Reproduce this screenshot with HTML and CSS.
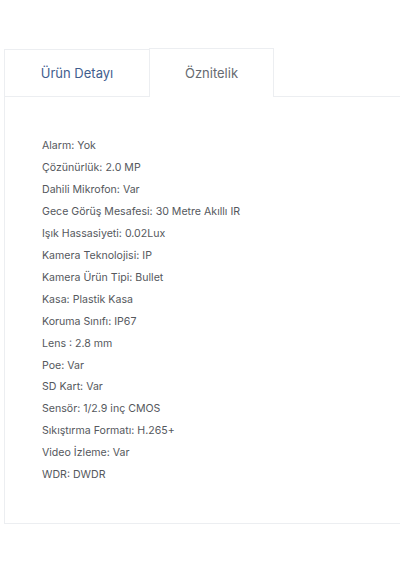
FILE: index.html
```html
<!DOCTYPE html>
<html lang="tr">
<head>
<meta charset="utf-8">
<title>Öznitelik</title>
<link rel="stylesheet" href="styles.css">
</head>
<body>
<div class="product-tabs">
  <div class="tab-bar">
    <div class="tab">Ürün Detayı</div>
    <div class="tab tab-active">Öznitelik</div>
    <div class="tab-rest"></div>
  </div>
  <div class="tab-panel">
    <ul class="attr-list">
      <li>Alarm: Yok</li>
      <li>Çözünürlük: 2.0 MP</li>
      <li>Dahili Mikrofon: Var</li>
      <li>Gece Görüş Mesafesi: 30 Metre Akıllı IR</li>
      <li>Işık Hassasiyeti: 0.02Lux</li>
      <li>Kamera Teknolojisi: IP</li>
      <li>Kamera Ürün Tipi: Bullet</li>
      <li>Kasa: Plastik Kasa</li>
      <li>Koruma Sınıfı: IP67</li>
      <li>Lens : 2.8 mm</li>
      <li>Poe: Var</li>
      <li>SD Kart: Var</li>
      <li>Sensör: 1/2.9 inç CMOS</li>
      <li>Sıkıştırma Formatı: H.265+</li>
      <li>Video İzleme: Var</li>
      <li>WDR: DWDR</li>
    </ul>
  </div>
</div>
</body>
</html>
```
FILE: styles.css
```css
html, body {
  margin: 0;
  padding: 0;
  background: #ffffff;
}

body {
  font-family: Inter, "Noto Sans", sans-serif;
  padding: 48px 0 0 4px;
}

.product-tabs {
  width: 410px;
}

.tab-bar {
  display: flex;
  align-items: flex-end;
  height: 49px;
}

.tab {
  box-sizing: border-box;
  width: 145px;
  height: 48px;
  display: flex;
  align-items: center;
  justify-content: center;
  border: 1px solid #eceef1;
  border-right: none;
  font-size: 13px;
  color: #3f5e8e;
  background: #fff;
}

.tab-active {
  width: 125px;
  height: 49px;
  border-right: 1px solid #eceef1;
  border-bottom: none;
  color: #666a70;
  padding-bottom: 1px;
}

.tab-rest {
  flex: 1;
  height: 1px;
  background: #eceef1;
}

.tab-panel {
  box-sizing: border-box;
  height: 427px;
  border: 1px solid #eceef1;
  border-top: none;
  padding: 38px 0 0 37px;
}

.attr-list {
  list-style: none;
  margin: 0;
  padding: 0;
}

.attr-list li {
  font-size: 10.6px;
  line-height: 21.95px;
  color: #55585d;
}
```
